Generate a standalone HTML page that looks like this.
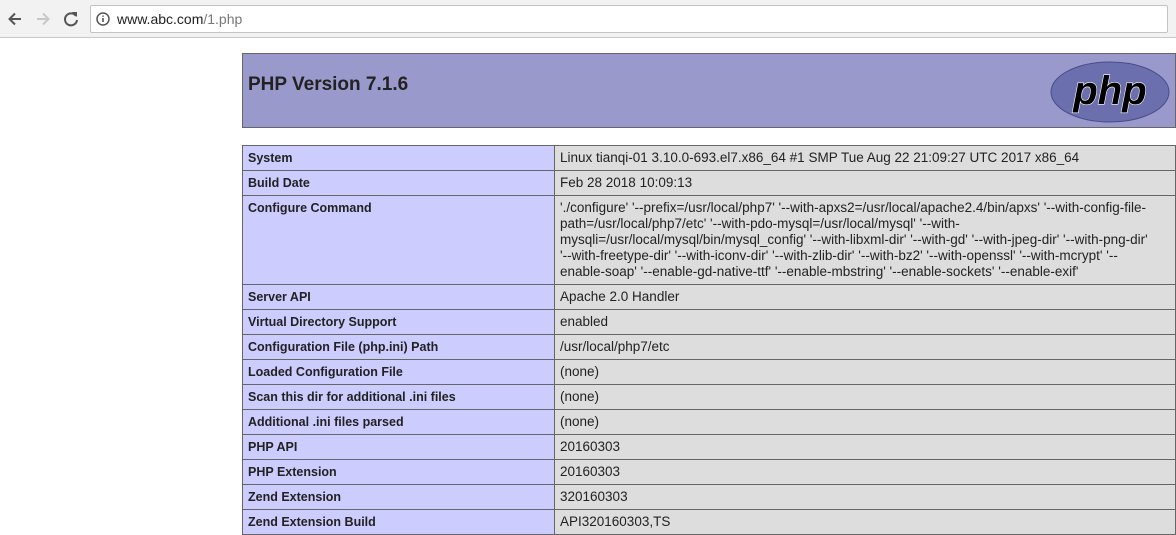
<!DOCTYPE html>
<html><head><style>
body{margin:0;width:1176px;height:532px;overflow:hidden;background:#fff;font-family:"Liberation Sans",Verdana,sans-serif;position:relative}
.bar{position:absolute;left:0;top:0;width:1176px;height:37px;background:#f2f2f2;border-bottom:1px solid #c8c8c8}
.addr{position:absolute;left:90px;top:5px;width:1076px;height:26px;background:#fff;border:1px solid #c4c4c4;border-radius:2px}
.url{position:absolute;left:26px;top:5px;font-size:14px;color:#222}
.url span{color:#777}
.hdr{position:absolute;left:242px;top:53px;width:932px;height:73px;background:#9999cc;border:1px solid #666}
.hdr h1{margin:0;position:absolute;left:5px;top:20px;font-size:19px;font-weight:bold;color:#222}
table{position:absolute;left:242px;top:145px;border-collapse:collapse;width:934px;font-size:12.5px;color:#222}
td{border:1px solid #666;padding:0 5px;height:24px;vertical-align:top;line-height:24px}
td.e{background:#ccccff;font-weight:bold;width:301px}
td.v{background:#dddddd;font-size:13.5px}
td.m{line-height:16px;padding-top:4px;padding-bottom:4px}
</style></head><body>
<div class="bar">
<svg style="position:absolute;left:6px;top:10px" width="18" height="18" viewBox="0 0 18 18"><path d="M15 9H4M9 3.5L3.5 9 9 14.5" stroke="#555" stroke-width="2" fill="none"/></svg>
<svg style="position:absolute;left:34px;top:10px" width="18" height="18" viewBox="0 0 18 18"><path d="M3 9h11M9 3.5L14.5 9 9 14.5" stroke="#c8c8c8" stroke-width="2" fill="none"/></svg>
<svg style="position:absolute;left:62px;top:10px" width="18" height="18" viewBox="0 0 18 18"><path d="M14 6A6 6 0 1 0 15 10" stroke="#555" stroke-width="2" fill="none"/><path d="M10 2h5v5z" fill="#555"/></svg>
<div class="addr">
<svg style="position:absolute;left:5px;top:6px" width="14" height="14" viewBox="0 0 14 14"><circle cx="7" cy="7" r="6" stroke="#555" stroke-width="1.5" fill="none"/><path d="M7 6v4M7 3.5v1.3" stroke="#555" stroke-width="1.6"/></svg>
<div class="url">www.abc.com<span>/1.php</span></div></div>
</div>
<div class="hdr"><h1>PHP Version 7.1.6</h1>
<svg style="position:absolute;left:806px;top:6px" width="122" height="64" viewBox="0 0 122 64"><ellipse cx="61" cy="32" rx="59" ry="30" fill="#6c6fae" stroke="#484c89" stroke-width="1"/><text x="61" y="44" text-anchor="middle" font-family="Liberation Sans,sans-serif" font-style="italic" font-weight="bold" font-size="40" fill="#000" stroke="#fff" stroke-width="1.2" paint-order="stroke">php</text></svg>
</div>
<table>
<tr><td class="e">System</td><td class="v">Linux tianqi-01 3.10.0-693.el7.x86_64 #1 SMP Tue Aug 22 21:09:27 UTC 2017 x86_64</td></tr>
<tr><td class="e">Build Date</td><td class="v">Feb 28 2018 10:09:13</td></tr>
<tr><td class="e m" style="height:80px">Configure Command</td><td class="v m">'./configure' '--prefix=/usr/local/php7' '--with-apxs2=/usr/local/apache2.4/bin/apxs' '--with-config-file-<br>path=/usr/local/php7/etc' '--with-pdo-mysql=/usr/local/mysql' '--with-<br>mysqli=/usr/local/mysql/bin/mysql_config' '--with-libxml-dir' '--with-gd' '--with-jpeg-dir' '--with-png-dir'<br>'--with-freetype-dir' '--with-iconv-dir' '--with-zlib-dir' '--with-bz2' '--with-openssl' '--with-mcrypt' '--<br>enable-soap' '--enable-gd-native-ttf' '--enable-mbstring' '--enable-sockets' '--enable-exif'</td></tr>
<tr><td class="e">Server API</td><td class="v">Apache 2.0 Handler</td></tr>
<tr><td class="e">Virtual Directory Support</td><td class="v">enabled</td></tr>
<tr><td class="e">Configuration File (php.ini) Path</td><td class="v">/usr/local/php7/etc</td></tr>
<tr><td class="e">Loaded Configuration File</td><td class="v">(none)</td></tr>
<tr><td class="e">Scan this dir for additional .ini files</td><td class="v">(none)</td></tr>
<tr><td class="e">Additional .ini files parsed</td><td class="v">(none)</td></tr>
<tr><td class="e">PHP API</td><td class="v">20160303</td></tr>
<tr><td class="e">PHP Extension</td><td class="v">20160303</td></tr>
<tr><td class="e">Zend Extension</td><td class="v">320160303</td></tr>
<tr><td class="e">Zend Extension Build</td><td class="v">API320160303,TS</td></tr>
</table>
</body></html>
